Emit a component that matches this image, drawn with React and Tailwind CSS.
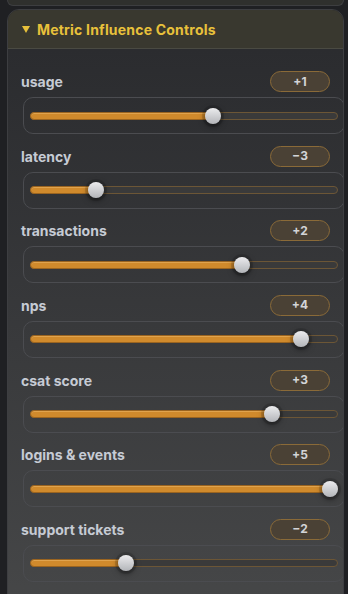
import React from "react";

const metrics = [
  { name: "usage", value: 1 },
  { name: "latency", value: -3 },
  { name: "transactions", value: 2 },
  { name: "nps", value: 4 },
  { name: "csat score", value: 3 },
  { name: "logins & events", value: 5 },
  { name: "support tickets", value: -2 },
];

function formatValue(v) {
  return v > 0 ? `+${v}` : `\u2212${Math.abs(v)}`;
}

function Slider({ value }) {
  const t = (value + 5) / 10;
  return (
    <div className="ml-[2px] w-[322px] h-[37px] shrink-0 rounded-[10px] border border-[#4b4c50] px-[6px] flex items-center">
      <div className="relative w-full h-[8px]">
        <div className="absolute inset-0 rounded-full bg-[#3a3a3a] border border-[#6c5636]" />
        <div
          className="absolute left-0 top-0 h-full rounded-full bg-[#d08a2c] border border-[#9a6420] shadow-[inset_0_1px_0_rgba(255,210,140,0.35)]"
          style={{ width: `calc(${t} * (100% - 16px) + 8px)` }}
        />
        <div
          className="absolute top-1/2 -translate-y-1/2 w-[16px] h-[16px] rounded-full bg-gradient-to-b from-[#ececee] to-[#b3b5b9] shadow-[0_0_0_3px_rgba(0,0,0,0.12),0_2px_6px_rgba(0,0,0,0.55)]"
          style={{ left: `calc(${t} * (100% - 16px))` }}
        />
      </div>
    </div>
  );
}

export default function App() {
  return (
    <div
      className="h-[594px] w-[348px] overflow-hidden bg-[#1f2023] pl-[7px] pr-[4px]"
      style={{ fontFamily: "Inter, 'Noto Sans', sans-serif" }}
    >
      <div className="h-[6px] rounded-b-[12px] border border-t-0 border-[#3d3e40] bg-[#2f302d]" />
      <div className="mt-[3px] h-[600px] rounded-t-[12px] border border-[#3d3e41] overflow-hidden flex flex-col">
        <div className="h-[39px] shrink-0 bg-[#39382f] border-b border-[#4a4a42] flex items-center pl-[14px] gap-[7px]">
          <svg width="8" height="7" viewBox="0 0 8 7" className="mt-[1px]">
            <polygon points="0,0 8,0 4,7" fill="#e8c13b" />
          </svg>
          <span className="text-[14px] font-bold text-[#e8c13b] tracking-[0.2px]">
            Metric Influence Controls
          </span>
        </div>
        <div className="flex-1 bg-gradient-to-b from-[#2b2c2f] to-[#464748] px-[13px] pt-[22px] flex flex-col gap-[11.67px]">
          {metrics.map((m) => (
            <div key={m.name} className="flex flex-col gap-[5px]">
              <div className="h-[21px] flex items-center justify-between">
                <span className="text-[14px] font-bold text-[#c6cbd4]">{m.name}</span>
                <span className="w-[60px] h-[21px] rounded-full border border-[#8a6a38] bg-[#4a4135] flex items-center justify-center text-[12px] font-bold text-[#d3d4d7]">
                  {formatValue(m.value)}
                </span>
              </div>
              <Slider value={m.value} />
            </div>
          ))}
        </div>
      </div>
    </div>
  );
}
